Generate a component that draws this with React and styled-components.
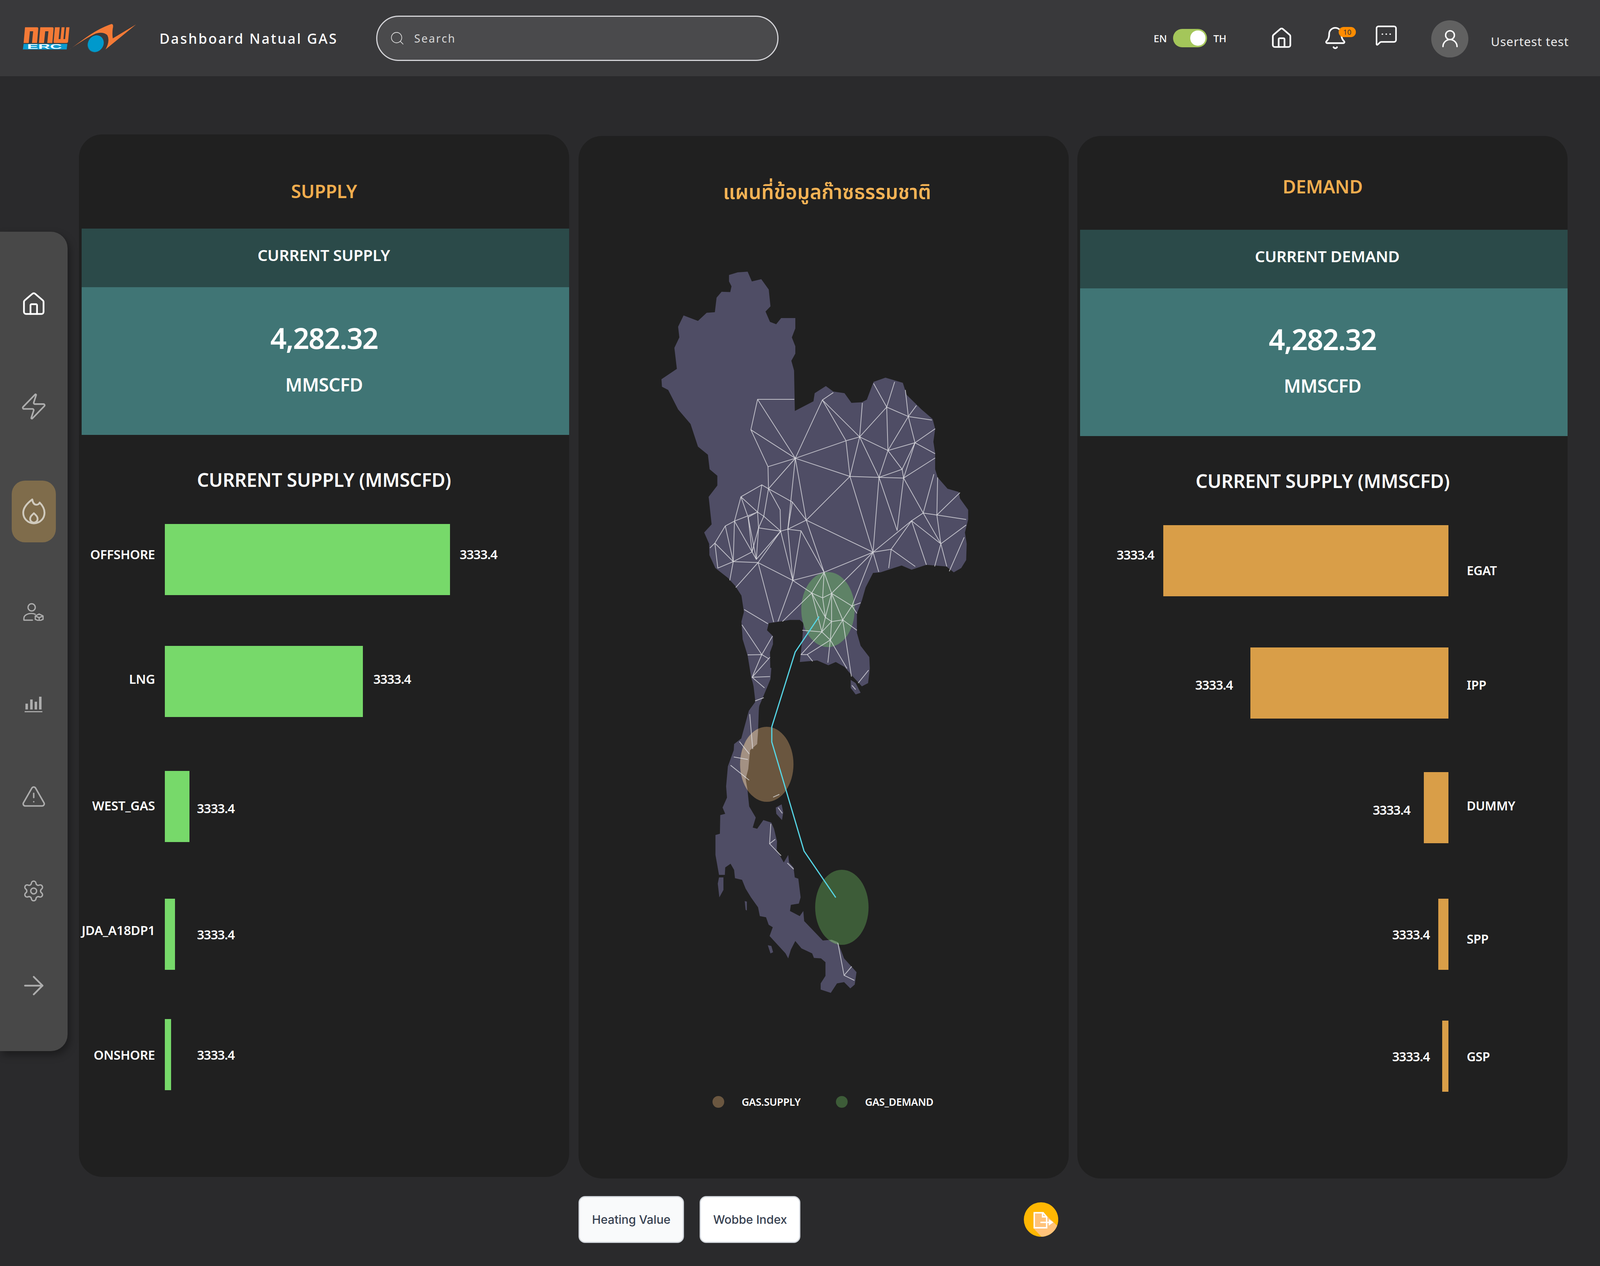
import styled, { createGlobalStyle } from 'styled-components';
import {
  House,
  Zap,
  TriangleAlert,
  Settings,
  ArrowRight,
  Search,
  Bell,
  MessageSquareMore,
  UserRound,
} from 'lucide-react';

// The design is drawn for 5760 wide, but the window measured 4096x3240 when this ran
// (window.innerWidth, not the 5760x3240 that was asked for). So horizontal sizes and
// fonts follow 100vw and heights stay in px: at 5760 wide this is 1:1, at 4096 the whole
// page still fits, but narrower than the reference, and the map and its circles are squeezed.
const x = (n) => `calc(100vw * ${n / 5760})`;

const supplyRows = [
  { name: 'OFFSHORE', width: 1026, mt: 68, gap: 35, labelShift: -14, valueShift: -14 },
  { name: 'LNG', width: 713, mt: 130, gap: 37, labelShift: -7, valueShift: -7 },
  { name: 'WEST_GAS', width: 88, mt: 138, gap: 27, labelShift: -3, valueShift: 4 },
  { name: 'JDA_A18DP1', width: 36, mt: 145, gap: 79, labelShift: -11, valueShift: 0 },
  { name: 'ONSHORE', width: 22, mt: 126, gap: 93, labelShift: 0, valueShift: 0 },
];

const demandRows = [
  { name: 'EGAT', width: 1026, mt: 68, gap: 33, labelShift: 24, valueShift: -16 },
  { name: 'IPP', width: 713, mt: 131, gap: 63, labelShift: 4, valueShift: 4 },
  { name: 'DUMMY', width: 88, mt: 137, gap: 49, labelShift: -6, valueShift: 5 },
  { name: 'SPP', width: 36, mt: 142, gap: 31, labelShift: 11, valueShift: 0 },
  { name: 'GSP', width: 22, mt: 130, gap: 45, labelShift: 0, valueShift: 0 },
];

const railItems = [
  { key: 'home', mt: 106, Icon: House, size: 94, stroke: 1.6, color: '#fff' },
  { key: 'power', mt: 104, Icon: Zap, size: 105, stroke: 1.3, color: '#adadad' },
  { key: 'gas', mt: 111, active: true, Icon: FlameIcon, size: 92 },
  { key: 'people', mt: 99, Icon: PersonBoxIcon, size: 76 },
  { key: 'chart', mt: 80, Icon: ChartIcon, size: 66 },
  { key: 'alert', mt: 76, Icon: TriangleAlert, size: 91, stroke: 1.4, color: '#adadad' },
  { key: 'settings', mt: 84, Icon: Settings, size: 85, stroke: 1.4, color: '#adadad' },
  { key: 'next', mt: 84, Icon: ArrowRight, size: 108, stroke: 1.4, color: '#adadad' },
];

// outline of the country, traced in two pieces
const landNorth =
  '475,125 510,117 550,115 567,145 605,138 635,170 642,222 622,238 640,270 665,277 685,258 742,258 742,290 728,318 742,345 742,368 726,390 737,420 740,545 815,515 820,490 865,468 895,485 940,490 968,520 1010,518 1030,510 1057,455 1105,442 1175,458 1190,495 1250,540 1295,570 1305,600 1298,640 1305,675 1305,725 1315,750 1355,785 1400,795 1405,815 1438,850 1438,880 1425,920 1432,955 1430,1005 1410,1030 1380,1043 1350,1025 1270,1020 1210,1035 1170,1022 1085,1043 1055,1045 1025,1090 1010,1130 990,1170 990,1230 1005,1270 1040,1305 1042,1340 1035,1385 1010,1395 968,1360 940,1335 905,1320 875,1330 830,1315 760,1320 770,1250 775,1200 760,1190 720,1190 680,1195 635,1200 628,1222 652,1240 652,1265 640,1290 642,1370 620,1400 600,1440 592,1480 585,1540 575,1568 520,1568 555,1470 580,1445 585,1415 565,1370 550,1300 530,1250 525,1195 535,1165 525,1115 500,1085 470,1060 420,1030 396,990 395,955 375,920 405,895 393,810 428,775 428,745 397,725 390,680 350,655 320,585 270,540 230,480 205,470 203,447 265,415 255,350 275,318 270,285 292,250 350,267 385,242 418,240 425,195 445,177 480,178 485,160 475,145';
const landIsland = '965,1375 985,1385 1005,1415 985,1420 965,1400';
const landSouth = [
  '470,0 590,15 585,60 550,120 520,170 515,270 510,320 470,345 460,420 445,460 455,500 465,570 502,615 485,655 510,660 545,625 590,635 605,660 622,710 620,745 660,795 685,765 690,795 715,815 722,855 742,860 755,935 745,960 700,965 695,990 750,1010 770,990 775,1030 880,1108 930,1105 965,1115 1000,1180 1070,1235 1060,1285 1035,1300 1000,1275 960,1280 925,1318 868,1305 868,1280 895,1250 895,1195 870,1180 830,1178 820,1160 760,1140 725,1110 700,1145 685,1180 670,1160 580,1090 598,1055 575,1045 560,1015 525,1010 515,975 475,935 445,900 425,865 385,858 380,825 360,800 330,815 328,845 295,845 275,765 275,685 300,680 302,605 330,600 315,575 340,535 335,490 345,410 378,345 380,320 425,295 470,180 500,150 490,90 475,40',
  '295,855 320,855 320,905 297,935 288,880',
  '615,575 648,562 657,595 650,625 618,600',
  '440,950 452,952 452,988 445,985',
  '570,1127 590,1130 600,1155 585,1160',
];

const meshNorth = [
  '738,509 590,509 563,603 632,717 742,691 590,509',
  '563,603 742,691 851,511 895,488',
  '851,511 946,637 962,747 742,691 946,637 1001,625 851,511',
  '1012,520 1001,625 962,747',
  '1001,625 1110,533 1057,460',
  '1110,533 1142,455',
  '1110,533 1197,562 1292,573',
  '1230,528 1197,562 1185,480',
  '1110,533 1115,667 1001,625',
  '1197,562 1115,667 1224,643 1197,562',
  '1305,600 1224,643 1305,677',
  '1224,643 1172,725 1115,667 1079,750 1001,625',
  '962,747 1079,750 1178,752 1224,643',
  '1079,750 1172,725 1178,752 1305,690',
  '962,747 786,882 742,691',
  '962,747 1055,981 1079,750 1152,914 1178,752 1257,860 1300,740',
  '1257,860 1312,866 1315,750',
  '1405,797 1312,866 1430,880',
  '1312,866 1328,955 1257,860 1210,884 1328,955 1430,897',
  '1303,1025 1328,955 1352,1025',
  '1362,1040 1422,935',
  '1270,1020 1210,884 1128,972 1225,1025',
  '1128,972 1118,1030',
  '1128,972 1055,981 1210,884',
  '1055,981 1078,1042',
  '1055,981 858,1043 786,882 1055,981',
  '858,1043 732,1068 712,910 786,882 730,826 712,910',
  '858,1043 765,915 732,1068',
  '765,915 712,910 683,916 732,1068',
  '742,691 712,910',
  '742,691 634,785 632,717',
  '634,785 607,773 523,810 497,885 460,900 418,953 398,968',
  '634,785 730,826',
  '634,785 681,850 683,916 615,870 634,785',
  '607,773 590,857 615,870',
  '590,857 594,906 683,916',
  '523,810 552,873 590,857 497,885',
  '552,873 568,980 594,906 615,870',
  '523,810 590,857',
  '497,885 568,980 492,1010 497,885',
  '552,873 585,1003',
  '594,906 585,1003 683,916',
  '568,980 585,1003',
  '460,900 492,1010 592,1013 683,916',
  '418,953 492,1010 430,1030 418,953',
  '492,1010 478,1068',
  '592,1013 502,1090',
  '592,1013 655,1197',
  '592,1013 732,1068 672,1195',
  '732,1068 808,1107 690,1195',
  '858,1043 808,1107 852,1122 858,1043 888,1108 852,1122 863,1182 808,1107',
  '888,1108 863,1182 888,1195 888,1108 933,1190 888,1195 849,1227 863,1182',
  '888,1108 970,1147 933,1190',
  '808,1107 849,1227 883,1252 888,1195',
  '933,1190 883,1252',
  '849,1227 770,1222',
  '849,1227 765,1297 790,1297 883,1252',
  '970,1147 1005,1137',
  '970,1147 1055,981 888,1108',
  '970,1147 990,1170',
  '933,1190 990,1222',
  '933,1190 968,1365',
  '873,1322 883,1252 950,1340',
  '790,1297 812,1318',
  '536,1158 632,1202',
  '527,1205 607,1297 650,1240',
  '550,1298 607,1297 635,1310',
  '607,1297 568,1367 640,1305',
  '568,1367 640,1365',
  '568,1367 618,1400',
  '580,1440 615,1430',
  '995,1385 1037,1345',
  '970,1392 985,1405',
];

const meshSouth = [
  '468,200 485,340',
  '410,310 466,360',
  '378,372 458,382',
  '360,405 465,465',
  '600,533 635,522',
  '628,575 652,598',
  '587,640 580,720 612,702',
  '580,720 645,768',
  '680,797 716,822',
  '965,1118 1000,1248 1043,1212',
  '1000,1248 1058,1268',
];

export default function App() {
  return (
    <Page>
      <GlobalStyle />
      <TopBar>
        <Logo />
        <AppTitle>Dashboard Natual GAS</AppTitle>
        <SearchBox>
          <IconBox $size={56}>
            <Search strokeWidth={1.1} color="#d8d8d8" />
          </IconBox>
          <SearchInput placeholder="Search" />
        </SearchBox>
        <TopRight>
          <LangLabel>EN</LangLabel>
          <Toggle>
            <ToggleKnob />
          </Toggle>
          <LangLabel>TH</LangLabel>
          <TopIcon $ml={157}>
            <IconBox $size={84}>
              <House strokeWidth={1.7} color="#fff" />
            </IconBox>
          </TopIcon>
          <TopIcon $ml={107}>
            <IconBox $size={88}>
              <Bell strokeWidth={1.6} color="#fff" />
            </IconBox>
            <Badge>10</Badge>
          </TopIcon>
          <TopIcon $ml={97} $mt={-16}>
            <IconBox $size={84}>
              <MessageSquareMore strokeWidth={1.6} color="#fff" />
            </IconBox>
          </TopIcon>
          <Avatar>
            <IconBox $size={76}>
              <UserRound strokeWidth={1.6} color="#fff" />
            </IconBox>
          </Avatar>
          <UserName>Usertest test</UserName>
        </TopRight>
      </TopBar>

      <Main>
        <Rail>
          {railItems.map(({ key, mt, active, Icon, size, stroke, color }) => (
            <RailSlot key={key} $mt={mt} $active={active}>
              <IconBox $size={size}>
                <Icon strokeWidth={stroke} color={color} />
              </IconBox>
            </RailSlot>
          ))}
        </Rail>

        <Content>
          <PanelRow>
            <Panel>
              <Title $top={100}>SUPPLY</Title>
              <Band $ml={10} $mt={51}>
                <BandHead $pr={12}>CURRENT SUPPLY</BandHead>
                <BandBody $pr={10}>
                  <BigNumber>4,282.32</BigNumber>
                  <Unit>MMSCFD</Unit>
                </BandBody>
              </Band>
              <ChartTitle>CURRENT SUPPLY (MMSCFD)</ChartTitle>
              {supplyRows.map((row) => (
                <BarRow key={row.name} $mt={row.mt}>
                  <RowLabel $shift={row.labelShift}>{row.name}</RowLabel>
                  <SupplyBar style={{ width: x(row.width) }} />
                  <RowValue $shift={row.valueShift} style={{ marginLeft: x(row.gap) }}>
                    3333.4
                  </RowValue>
                </BarRow>
              ))}
            </Panel>

            <MapPanel>
              <MapTitle>แผนที่ข้อมูลก๊าซธรรมชาติ</MapTitle>
              <ThailandMap />
              <Legend>
                <LegendDot $color="#6b5740" />
                <LegendText>GAS.SUPPLY</LegendText>
                <LegendDot $color="#3d5c38" $ml={127} />
                <LegendText>GAS_DEMAND</LegendText>
              </Legend>
            </MapPanel>

            <DemandPanel>
              <Title $top={84}>DEMAND</Title>
              <Band $ml={9} $mt={66}>
                <BandHead $pl={24}>CURRENT DEMAND</BandHead>
                <BandBody $pr={10}>
                  <BigNumber>4,282.32</BigNumber>
                  <Unit>MMSCFD</Unit>
                </BandBody>
              </Band>
              <ChartTitle>CURRENT SUPPLY (MMSCFD)</ChartTitle>
              {demandRows.map((row) => (
                <DemandRow key={row.name} $mt={row.mt}>
                  <RowValue $shift={row.valueShift} style={{ marginRight: x(row.gap) }}>
                    3333.4
                  </RowValue>
                  <DemandBar style={{ width: x(row.width) }} />
                  <DemandLabel $shift={row.labelShift}>{row.name}</DemandLabel>
                </DemandRow>
              ))}
            </DemandPanel>
          </PanelRow>

          <Footer>
            <TabButton $bg="#f9fafb">Heating Value</TabButton>
            <TabButton $bg="#fff" $ml={57}>Wobbe Index</TabButton>
            <ExportButton aria-label="export">
              <ExportIcon />
            </ExportButton>
          </Footer>
        </Content>
      </Main>
    </Page>
  );
}

function Logo() {
  return (
    <LogoSvg viewBox="0 0 1320 360">
      <path
        fill="#f47a36"
        d="M40 232 L55 62 H185 Q200 62 198 80 L185 232 H130 L143 105 H108 L95 232 Z"
      />
      <path
        fill="#f47a36"
        d="M205 232 L220 62 H350 Q365 62 363 80 L350 232 H295 L308 105 H273 L260 232 Z"
      />
      <path
        fill="#f47a36"
        d="M378 62 H430 L418 190 H438 L450 62 H482 L470 190 H488 L500 62 H535 L520 218 Q518 232 500 232 H375 Q362 232 364 218 Z"
      />
      <polygon fill="#0a9bd0" points="40,242 512,242 505,302 32,302" />
      <LogoText x="78" y="296" textLength="376" lengthAdjust="spacingAndGlyphs">
        ERC
      </LogoText>
      <path
        fill="#f47a36"
        d="M510 318 C640 235 780 100 985 28 Q1015 25 1003 75 Q995 130 1003 182 L1255 32 L925 302 Q975 210 945 150 Q905 105 820 130 Q720 175 510 318 Z"
      />
      <ellipse cx="816" cy="243" rx="82" ry="92" transform="rotate(35 816 243)" fill="#157f9d" />
      <ellipse cx="820" cy="238" rx="82" ry="92" transform="rotate(35 820 238)" fill="#0099cc" />
    </LogoSvg>
  );
}

function FlameIcon() {
  return (
    <svg viewBox="0 0 24 26" fill="none" stroke="#d0cabd" strokeWidth="1.7" strokeLinejoin="round">
      <path d="M10.5 1.5 C11 5 12.5 6.5 14.5 6.5 C16 6.5 17 5.5 17.5 4.5 C20.5 7.5 22 10.5 22 14 A10 10 0 1 1 2 14 C2 9 6.5 4.5 10.5 1.5 Z" />
      <path d="M12 14.5 C10 16.5 8.5 17.5 8.5 19.8 A3.5 3.5 0 0 0 15.5 19.8 C15.5 17.5 14 16.5 12 14.5 Z" />
    </svg>
  );
}

function PersonBoxIcon() {
  return (
    <svg viewBox="0 0 76 66" fill="none" stroke="#adadad" strokeWidth="4.5" strokeLinejoin="round" strokeLinecap="round">
      <circle cx="31" cy="16" r="13" />
      <path d="M3 62 V56 C3 44 17 38 30 38 C35 38 40 39 44 41 M3 62 H34" />
      <path d="M58 40 L72 47 V59 L58 65 L44 59 V47 Z M44 47 L58 53 L72 47 M58 53 V65" />
    </svg>
  );
}

function ChartIcon() {
  return (
    <svg viewBox="0 0 66 58" fill="#adadad">
      <rect x="3" y="25" width="9" height="21" />
      <rect x="20" y="10" width="9" height="36" />
      <rect x="36" y="18" width="9" height="28" />
      <rect x="52" y="0" width="9" height="46" />
      <rect x="0" y="52" width="64" height="4" />
    </svg>
  );
}

function ExportIcon() {
  return (
    <ExportSvg viewBox="81 51 368 368">
      <defs>
        <clipPath id="exportClip">
          <circle cx="265" cy="235" r="184" />
        </clipPath>
      </defs>
      <circle cx="265" cy="235" r="184" fill="#ffb703" />
      <g clipPath="url(#exportClip)">
        <polygon fill="#ffc27a" points="185,155 290,155 332,200 450,312 450,430 280,430 185,330" />
      </g>
      <path d="M192 162 H287 L325 208 V323 H192 Z" fill="none" stroke="#fff" strokeWidth="15" />
      <path d="M281 165 V206 H325" fill="none" stroke="#fff" strokeWidth="15" />
      <rect x="258" y="258" width="92" height="15" fill="#fff" />
      <polygon points="347,230 397,265 347,300" fill="#fff" />
    </ExportSvg>
  );
}

function ThailandMap() {
  const north = 'translate(2200 600) scale(0.893 0.829)';
  const south = 'translate(2400 1700) scale(0.638 0.638)';
  return (
    <MapSvg viewBox="2083 600 1763 2120" preserveAspectRatio="none">
      <defs>
        <g id="land">
          <g transform={north}>
            <polygon points={landNorth} />
            <polygon points={landIsland} />
          </g>
          <g transform={south}>
            {landSouth.map((points) => (
              <polygon key={points} points={points} />
            ))}
          </g>
        </g>
        <clipPath id="brownClip">
          <circle cx="2760" cy="1956" r="96" />
        </clipPath>
        <clipPath id="greenClip">
          <circle cx="3030" cy="2322" r="96" />
        </clipPath>
      </defs>

      <use href="#land" fill="#4f4d65" />
      <circle cx="2980" cy="1560" r="96" fill="#5e8266" />
      <circle cx="2760" cy="1956" r="96" fill="#6a563f" />
      <circle cx="3030" cy="2322" r="96" fill="#3d5c38" />
      <g clipPath="url(#brownClip)">
        <use href="#land" fill="#a39183" />
      </g>
      <g clipPath="url(#greenClip)">
        <use href="#land" fill="#6b8a6b" />
      </g>

      <g fill="none" stroke="#e4e4e8" strokeOpacity="0.75" strokeWidth="2" strokeLinejoin="round">
        <g transform={north}>
          {meshNorth.map((points) => (
            <polyline key={points} points={points} vectorEffect="non-scaling-stroke" />
          ))}
        </g>
        <g transform={south}>
          {meshSouth.map((points) => (
            <polyline key={points} points={points} vectorEffect="non-scaling-stroke" />
          ))}
        </g>
      </g>

      <polyline
        points="2948,1578 2862,1669 2778,1860 2778,1899 2894,2178 3008,2297"
        fill="none"
        stroke="#56d6e6"
        strokeWidth="3"
        vectorEffect="non-scaling-stroke"
      />
    </MapSvg>
  );
}

const GlobalStyle = createGlobalStyle`
  html, body {
    margin: 0;
    padding: 0;
    background: #2a2a2c;
  }

  * {
    box-sizing: border-box;
  }
`;

const Page = styled.div`
  width: 100vw;
  height: 3240px;
  overflow: hidden;
  background: #2a2a2c;
  color: #fff;
  font-family: "Noto Sans", "Noto Sans Thai", "DejaVu Sans", sans-serif;
`;

const IconBox = styled.span`
  display: flex;
  flex: none;

  svg {
    display: block;
    width: ${(p) => x(p.$size)};
    height: auto;
  }
`;

const TopBar = styled.header`
  display: flex;
  align-items: center;
  height: 195px;
  padding: 0 ${x(112)} 0 ${x(72)};
  background: #39393b;
`;

const LogoSvg = styled.svg`
  width: ${x(440)};
  height: ${x(120)};
  flex: none;
`;

const LogoText = styled.text`
  fill: #fff;
  font-family: "Liberation Sans", sans-serif;
  font-weight: 700;
  font-size: 66px;
`;

const AppTitle = styled.div`
  flex: none;
  width: ${x(780)};
  margin-left: ${x(62)};
  font-size: ${x(50)};
  font-weight: 500;
  letter-spacing: ${x(4.9)};
  white-space: nowrap;
`;

const SearchBox = styled.div`
  display: flex;
  align-items: center;
  flex: none;
  gap: ${x(30)};
  width: ${x(1449)};
  height: 116px;
  padding-left: ${x(44)};
  border: 3px solid #d4d4d8;
  border-radius: 58px;
  background: #4a4a4c;
`;

const SearchInput = styled.input`
  flex: 1;
  min-width: 0;
  border: 0;
  outline: 0;
  background: transparent;
  color: #ddd;
  font-family: inherit;
  font-size: ${x(40)};
  letter-spacing: ${x(4)};

  &::placeholder {
    color: #d8d8d8;
    opacity: 1;
  }
`;

const TopRight = styled.div`
  display: flex;
  align-items: center;
  margin-left: auto;
`;

const LangLabel = styled.span`
  margin-top: 2px;
  font-size: ${x(36)};
  font-weight: 500;
`;

const Toggle = styled.div`
  display: flex;
  align-items: center;
  justify-content: flex-end;
  width: ${x(122)};
  height: ${x(66)};
  margin: 0 ${x(23)} 0 ${x(22)};
  padding-right: ${x(6)};
  border-radius: ${x(33)};
  background: #a4c65a;
`;

const ToggleKnob = styled.div`
  width: ${x(54)};
  height: ${x(54)};
  border-radius: 50%;
  background: #fff;
`;

const TopIcon = styled.div`
  position: relative;
  display: flex;
  margin-left: ${(p) => x(p.$ml)};
  margin-top: ${(p) => p.$mt || 0}px;
`;

const Badge = styled.span`
  position: absolute;
  top: ${x(4)};
  left: ${x(56)};
  width: ${x(62)};
  height: ${x(36)};
  border-radius: ${x(18)};
  background: #ff8c00;
  color: #333;
  font-size: ${x(26)};
  line-height: ${x(36)};
  text-align: center;
`;

const Avatar = styled.div`
  display: flex;
  align-items: center;
  justify-content: center;
  width: ${x(133)};
  height: ${x(133)};
  margin: 4px 0 0 ${x(121)};
  border-radius: 50%;
  background: #616161;
`;

const UserName = styled.span`
  margin: 16px 0 0 ${x(81)};
  font-size: ${x(44)};
  letter-spacing: ${x(1.4)};
  color: #ececec;
  white-space: nowrap;
`;

const Main = styled.main`
  display: flex;
  align-items: flex-start;
`;

const Rail = styled.nav`
  display: flex;
  flex-direction: column;
  align-items: center;
  flex: none;
  width: ${x(243)};
  height: 2097px;
  margin: 398px ${x(41)} 0 0;
  border-radius: 0 ${x(60)} ${x(60)} 0;
  background: #484848;
  box-shadow: 6px 10px 20px rgba(0, 0, 0, 0.35);
`;

const RailSlot = styled.div`
  display: flex;
  align-items: center;
  justify-content: center;
  flex: none;
  width: ${x(159)};
  height: 158px;
  margin-top: ${(p) => p.$mt}px;
  border-radius: ${x(48)};
  background: ${(p) => (p.$active ? '#7f6c4b' : 'transparent')};
`;

const Content = styled.div`
  display: flex;
  flex-direction: column;
  padding-top: 149px;
`;

const PanelRow = styled.div`
  display: flex;
  align-items: flex-start;
  gap: ${x(34)};
`;

const Panel = styled.section`
  flex: none;
  width: ${x(1765)};
  height: 2668px;
  border-radius: ${x(84)};
  background: #202020;
  overflow: hidden;
`;

const MapPanel = styled(Panel)`
  display: flex;
  flex-direction: column;
  margin-top: 4px;
`;

const DemandPanel = styled(Panel)`
  margin: 4px 0 0 ${x(-3)};
`;

const Title = styled.h2`
  margin: 0;
  padding-top: ${(p) => p.$top}px;
  font-size: ${x(66)};
  line-height: 90px;
  font-weight: 600;
  letter-spacing: ${x(-0.5)};
  text-align: center;
  color: #f0ad4e;
`;

const MapTitle = styled.h2`
  margin: 0;
  height: 252px;
  padding: 96px 0 0 ${x(24)};
  font-size: ${x(72)};
  line-height: 90px;
  font-weight: 600;
  text-align: center;
  white-space: nowrap;
  color: #f4b355;
`;

const Band = styled.div`
  margin-left: ${(p) => x(p.$ml)};
  margin-top: ${(p) => p.$mt}px;
`;

const BandHead = styled.div`
  display: flex;
  align-items: center;
  justify-content: center;
  height: 150px;
  padding: 0 ${(p) => x(p.$pr || 0)} 16px ${(p) => x(p.$pl || 0)};
  background: #2b4a49;
  font-size: ${x(57)};
  font-weight: 600;
  letter-spacing: ${x(-0.5)};
`;

const BandBody = styled.div`
  height: 378px;
  padding: 65px ${(p) => x(p.$pr || 0)} 0 0;
  background: #407575;
  text-align: center;
`;

const BigNumber = styled.div`
  font-size: ${x(103)};
  line-height: 130px;
  font-weight: 600;
  letter-spacing: ${x(-3)};
`;

const Unit = styled.div`
  margin-top: 9px;
  font-size: ${x(66)};
  line-height: 90px;
  font-weight: 600;
  letter-spacing: ${x(-1)};
`;

const ChartTitle = styled.h3`
  margin: 70px 0 0;
  font-size: ${x(67.5)};
  line-height: 90px;
  font-weight: 600;
  letter-spacing: ${x(-0.5)};
  text-align: center;
  white-space: nowrap;
`;

const BarRow = styled.div`
  display: flex;
  align-items: center;
  height: 182px;
  margin-top: ${(p) => p.$mt}px;
  padding-left: ${x(10)};
`;

const DemandRow = styled(BarRow)`
  justify-content: flex-end;
  padding-left: 0;
`;

const RowLabel = styled.div`
  flex: none;
  display: flex;
  justify-content: flex-end;
  width: ${x(264)};
  margin-right: ${x(36)};
  margin-top: ${(p) => p.$shift * 2}px;
  font-size: ${x(46)};
  font-weight: 600;
  letter-spacing: ${x(-0.5)};
  white-space: nowrap;
`;

const SupplyBar = styled.div`
  flex: none;
  height: 182px;
  background: #77d96a;
`;

const DemandBar = styled.div`
  flex: none;
  height: 182px;
  background: #d99e48;
`;

const RowValue = styled.div`
  margin-top: ${(p) => p.$shift * 2}px;
  font-size: ${x(46)};
  font-weight: 600;
  letter-spacing: ${x(-1.5)};
  white-space: nowrap;
`;

const DemandLabel = styled.div`
  flex: none;
  width: ${x(364)};
  margin-left: ${x(66)};
  margin-top: ${(p) => p.$shift * 2}px;
  font-size: ${x(45)};
  font-weight: 600;
  letter-spacing: ${x(-0.5)};
  white-space: nowrap;
`;

const MapSvg = styled.svg`
  display: block;
  flex: none;
  width: ${x(1765)};
  height: 2120px;
`;

const Legend = styled.div`
  display: flex;
  align-items: center;
  height: 42px;
  margin: 79px 0 0 ${x(482)};
`;

const LegendDot = styled.span`
  flex: none;
  width: ${x(42)};
  height: ${x(42)};
  margin-left: ${(p) => x(p.$ml || 0)};
  border-radius: 50%;
  background: ${(p) => p.$color};
`;

const LegendText = styled.span`
  margin-left: ${x(63)};
  font-size: ${x(37)};
  font-weight: 600;
  letter-spacing: ${x(-0.5)};
  white-space: nowrap;
`;

const Footer = styled.div`
  display: flex;
  align-items: center;
  height: 124px;
  margin: 43px 0 0 ${x(1799)};
`;

const TabButton = styled.button`
  height: 120px;
  margin-left: ${(p) => x(p.$ml || 0)};
  padding: 0 ${x(44)};
  border: 3px solid #d1d5db;
  border-radius: ${x(24)};
  background: ${(p) => p.$bg};
  color: #374151;
  font-family: "Inter", "Liberation Sans", sans-serif;
  font-size: ${x(42.5)};
  font-weight: 500;
  white-space: nowrap;
`;

const ExportButton = styled.button`
  display: flex;
  align-items: center;
  width: ${x(124)};
  height: 124px;
  margin-left: ${x(804)};
  padding: 0;
  border: 0;
  background: transparent;
`;

const ExportSvg = styled.svg`
  width: ${x(124)};
  height: ${x(124)};
`;
